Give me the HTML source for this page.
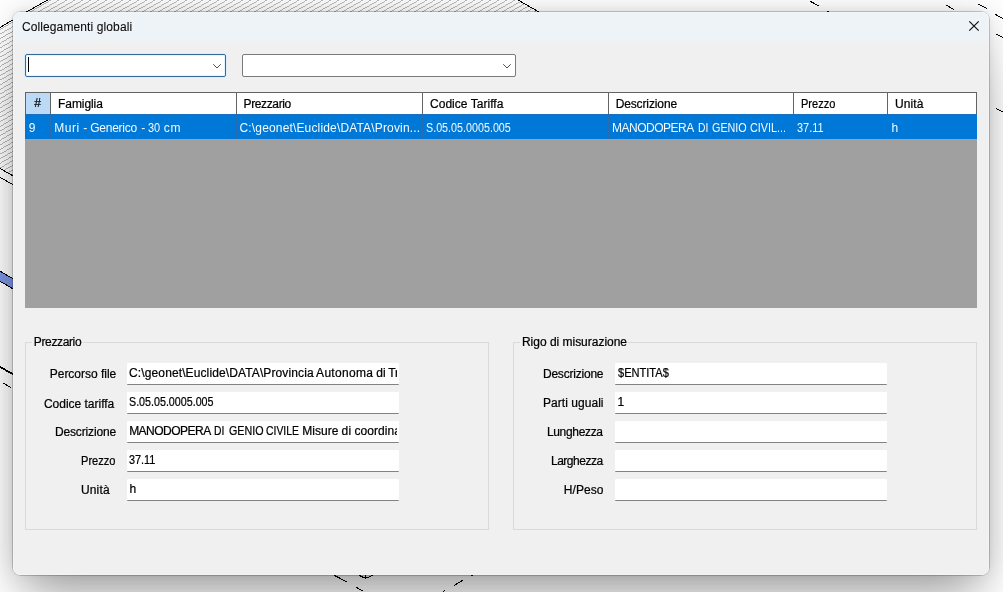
<!DOCTYPE html>
<html lang="it">
<head>
<meta charset="utf-8">
<title>Collegamenti globali</title>
<style>
*{box-sizing:border-box;margin:0;padding:0}
html,body{width:1003px;height:592px;overflow:hidden;background:#fff}
body{position:relative;font-family:"Liberation Sans",sans-serif;font-size:12px;color:#000;line-height:15px}
#bg{position:absolute;left:0;top:0;width:1003px;height:592px}
#shadow{position:absolute;left:13px;top:12px;width:976px;height:563px;border-radius:8px;
  box-shadow:0 0 0 1px rgba(0,0,0,.19),0 -2px 7px 0 rgba(0,0,0,.05),0 36px 48px -12px rgba(0,0,0,.3),0 0 32px 0 rgba(0,0,0,.16)}
#dlg{position:absolute;left:13px;top:12px;width:976px;height:563px;border-radius:7px;background:#f0f0f0;overflow:hidden}
#pc{position:absolute;left:-13px;top:-12px;width:1003px;height:592px;will-change:transform}
#hl{position:absolute;left:13px;top:12px;width:976px;height:563px;border-radius:7px;box-shadow:inset 0 0 0 1px rgba(255,255,255,.28)}
#tbar{position:absolute;left:13px;top:12px;width:976px;height:32px;background:linear-gradient(#eef3f8 0,#eef3f8 27.5px,#f0f0f0 31px)}
.w{position:absolute;top:0;white-space:pre;transform-origin:0 0}
.t{position:absolute;white-space:pre;height:15px;line-height:15px;transform-origin:0 0;-webkit-text-stroke:.22px currentColor}
#close{position:absolute;left:968px;top:20px;width:12px;height:12px}
.combo{position:absolute;top:54px;height:23px;background:#fff;border:1px solid #7a7a7a;border-radius:2px}
#c1{left:25px;width:201px;border-color:#336b9f;box-shadow:inset 0 0 0 1px #e4f6ff,0 0 0 1px rgba(200,235,255,.55)}
#c2{left:242px;width:274px}
.chev{position:absolute;top:62px;width:12px;height:8px}
#caret{position:absolute;left:28px;top:57px;width:1px;height:15px;background:#000}
#grid{position:absolute;left:25px;top:92px;width:952px;height:216px;background:#a0a0a0;overflow:hidden}
#ghead{position:absolute;left:0;top:0;width:952px;height:22px;background:#fff;box-shadow:inset 1px 1px 0 #646464,inset -1px 0 0 #646464}
.hc{position:absolute;top:1px;height:21px;overflow:hidden}
.hs{position:absolute;top:1px;width:1px;height:21px;background:#646464}
#grow{position:absolute;left:0;top:22px;width:952px;height:25px;background:#0078d7;color:#fff;border-top:1px solid #1a6fbd}
.rc{position:absolute;top:-1px;height:25px;overflow:hidden}
.rc .t{-webkit-text-stroke:0;color:#f4fbff}
.rs{position:absolute;top:0;width:1px;height:24px;background:#2a6cb0}
.gb{position:absolute;top:342px;width:464px;height:188px;border:1px solid #d9d9d9}
.lgb{position:absolute;top:336px;height:13px;background:#f0f0f0}
.in{position:absolute;width:272px;height:22px;background:#fff;border-bottom:1px solid #838383;border-radius:1px;overflow:hidden}
.ic{position:absolute;left:1px;top:0;width:269px;height:21px;overflow:hidden}
</style>
</head>
<body>
<svg id="bg" width="1003" height="592" viewBox="0 0 1003 592">
  <path d="M51.07 0.00L-1.00 30.06 M59.07 0.00L-1.00 34.68 M67.07 0.00L-1.00 39.30 M75.07 0.00L-1.00 43.92 M83.07 0.00L-1.00 48.54 M91.07 0.00L-1.00 53.16 M99.07 0.00L-1.00 57.78 M107.07 0.00L-1.00 62.39 M115.07 0.00L-1.00 67.01 M123.07 0.00L-1.00 71.63 M131.07 0.00L-1.00 76.25 M139.07 0.00L-1.00 80.87 M147.07 0.00L-1.00 85.49 M155.07 0.00L-1.00 90.11 M163.07 0.00L-1.00 94.73 M171.07 0.00L-1.00 99.34 M179.07 0.00L-1.00 103.96 M187.07 0.00L-1.00 108.58 M195.07 0.00L-1.00 113.20 M203.07 0.00L-1.00 117.82 M211.07 0.00L-1.00 122.44 M219.07 0.00L-1.00 127.06 M227.07 0.00L-1.00 131.68 M235.07 0.00L-1.00 136.30 M243.07 0.00L-1.00 140.91 M251.07 0.00L-1.00 145.53 M259.07 0.00L-1.00 150.15 M267.07 0.00L-1.00 154.77 M275.07 0.00L-1.00 159.39 M283.07 0.00L-1.00 164.01 M291.07 0.00L-0.30 168.22 M299.07 0.00L3.70 170.53 M307.07 0.00L7.70 172.84 M315.07 0.00L11.70 175.15 M323.07 0.00L15.70 177.46 M331.07 0.00L19.70 179.77 M339.07 0.00L23.70 182.08 M347.07 0.00L27.70 184.39 M355.07 0.00L31.70 186.70 M363.07 0.00L35.70 189.01 M371.07 0.00L39.70 191.32 M379.07 0.00L43.70 193.63 M387.07 0.00L47.70 195.94 M395.07 0.00L51.70 198.25 M403.07 0.00L55.70 200.56 M411.07 0.00L59.70 202.87 M419.07 0.00L63.70 205.18 M427.07 0.00L67.70 207.48 M435.07 0.00L71.70 209.79 M443.07 0.00L75.70 212.10 M451.07 0.00L79.70 214.41 M459.07 0.00L83.70 216.72 M467.07 0.00L87.70 219.03 M475.07 0.00L91.70 221.34 M483.07 0.00L95.70 223.65 M491.07 0.00L99.70 225.96 M499.07 0.00L103.70 228.27 M507.07 0.00L107.70 230.58 M515.07 0.00L111.70 232.89 M520.53 1.46L115.70 235.20 M524.53 3.77L119.70 237.51 M528.53 6.08L123.70 239.82 M532.53 8.39L127.70 242.13 M536.53 10.70L131.70 244.43" stroke="#a2a2a2" stroke-width="0.75" fill="none" shape-rendering="crispEdges"/>
  <polygon points="0,271.2 13,278.7 13,288.8 0,281.3" fill="#7c96e6"/>
  <g stroke="#000" stroke-width="1" fill="none" shape-rendering="crispEdges">
    <path d="M0 27.4 L47.4 0"/>
    <path d="M518 0 L540 12.5"/>
    <path d="M0 168.4 L13 175.8"/>
    <path d="M0 177.3 L13 184.7"/>
    <path d="M0 271.2 L13 278.7"/>
    <path d="M0 281.3 L13 288.8"/>
    <path d="M0 366.9 L13 374.3" stroke-width="1.8"/>
    <path d="M3.3 383.2 L11 387.5"/>
    <path d="M810 1.2 L819.2 6"/>
    <path d="M827 11 L828.5 11.6"/>
    <path d="M946.2 5 L953.8 9.5"/>
    <path d="M978 4 L987 8.5"/>
    <path d="M995 14.2 L1003 18.6"/>
    <path d="M996 34.2 L1003 37.6"/>
    <path d="M996 108.4 L1003 111.8"/>
    <path d="M334 575.2 L346.7 581.8"/>
    <path d="M359 575.3 L365.5 578.4 L372.6 575.3"/>
    <path d="M365.5 575 L365.5 578.4"/>
    <path d="M355.9 587 L363.5 591.5"/>
    <path d="M454.3 585.4 L462.9 580.2"/>
    <path d="M443 591.5 L445 590.5"/>
    <path d="M471 575.5 L473 575.5"/>
  </g>
</svg>
<div id="shadow"></div>
<div id="dlg"><div id="pc">
  <div id="tbar"></div>
  <span class="t" style="left:21.90px;letter-spacing:0.114px;top:20px;-webkit-text-stroke:.1px #0c0c0c;color:#0c0c0c;">Collegamenti globali</span>
  <svg id="close" viewBox="0 0 12 12"><path d="M1.3 1.3 L10.7 10.7 M10.7 1.3 L1.3 10.7" stroke="#111" stroke-width="1.2" fill="none"/></svg>

  <div class="combo" id="c1"></div>
  <div id="caret"></div>
  <svg class="chev" style="left:211px" viewBox="0 0 12 8"><path d="M2.6 2.6 L6 6 L9.4 2.6" stroke="#484848" stroke-width="0.95" stroke-linecap="square" fill="none"/></svg>
  <div class="combo" id="c2"></div>
  <svg class="chev" style="left:501px" viewBox="0 0 12 8"><path d="M2.6 2.6 L6 6 L9.4 2.6" stroke="#484848" stroke-width="0.95" stroke-linecap="square" fill="none"/></svg>

  <div id="grid">
    <div id="ghead">
<div class="hc" style="left:1px;width:24px;background:#bcdaf5;"><span class="t" style="left:8.15px;top:3px;">#</span></div>
<div class="hs" style="left:25px"></div>
<div class="hc" style="left:26px;width:185px;"><span class="t" style="left:7.04px;letter-spacing:-0.076px;top:4px;">Famiglia</span></div>
<div class="hs" style="left:211px"></div>
<div class="hc" style="left:212px;width:185px;"><span class="t" style="left:6.54px;letter-spacing:-0.367px;top:4px;">Prezzario</span></div>
<div class="hs" style="left:397px"></div>
<div class="hc" style="left:398px;width:185px;"><span class="t" style="left:7.00px;letter-spacing:0.032px;top:4px;">Codice Tariffa</span></div>
<div class="hs" style="left:583px"></div>
<div class="hc" style="left:584px;width:184px;"><span class="t" style="left:6.64px;letter-spacing:-0.118px;top:4px;">Descrizione</span></div>
<div class="hs" style="left:768px"></div>
<div class="hc" style="left:769px;width:93px;"><span class="t" style="left:6.98px;transform:scaleX(0.921);top:4px;">Prezzo</span></div>
<div class="hs" style="left:862px"></div>
<div class="hc" style="left:863px;width:89px;"><span class="t" style="left:7.11px;letter-spacing:0.075px;top:4px;">Unità</span></div>
    </div>
    <div id="grow">
<div class="rc" style="left:1px;width:23px"><span class="t" style="left:2.81px;top:7px;">9</span></div>
<div class="rs" style="left:25px"></div>
<div class="rc" style="left:26px;width:184px"><span class="t" style="left:0;top:7px;"><span class="w" style="left:3.24px;letter-spacing:0.521px;">Muri </span><span class="w" style="left:32.13px;">- </span><span class="w" style="left:39.30px;letter-spacing:-0.263px;">Generico </span><span class="w" style="left:90.13px;">- </span><span class="w" style="left:97.43px;transform:scaleX(0.915);">30 </span><span class="w" style="left:112.71px;letter-spacing:0.863px;">cm</span></span></div>
<div class="rs" style="left:211px"></div>
<div class="rc" style="left:212px;width:184px"><span class="t" style="left:2.50px;letter-spacing:0.159px;top:7px;">C:\geonet\Euclide\DATA\Provin...</span></div>
<div class="rs" style="left:397px"></div>
<div class="rc" style="left:398px;width:184px"><span class="t" style="left:2.68px;transform:scaleX(0.895);top:7px;">S.05.05.0005.005</span></div>
<div class="rs" style="left:583px"></div>
<div class="rc" style="left:584px;width:183px"><span class="t" style="left:0;top:7px;"><span class="w" style="left:3.04px;letter-spacing:-0.492px;">MANODOPERA </span><span class="w" style="left:88.96px;transform:scaleX(0.86);">DI </span><span class="w" style="left:102.76px;transform:scaleX(0.898);">GENIO </span><span class="w" style="left:140.97px;transform:scaleX(0.903);">CIVIL...</span></span></div>
<div class="rs" style="left:768px"></div>
<div class="rc" style="left:769px;width:92px"><span class="t" style="left:3.43px;transform:scaleX(0.91);top:7px;">37.11</span></div>
<div class="rs" style="left:862px"></div>
<div class="rc" style="left:863px;width:89px"><span class="t" style="left:3.49px;top:7px;">h</span></div>
    </div>
  </div>

  <div class="gb" style="left:25px"></div>
  <div class="gb" style="left:513px"></div>
  <div class="lgb" style="left:32px;width:51px"></div>
  <div class="lgb" style="left:520px;width:108px"></div>
  <span class="t" style="left:33.84px;letter-spacing:-0.367px;top:335px;">Prezzario</span>
  <span class="t" style="left:521.94px;letter-spacing:-0.015px;top:335px;">Rigo di misurazione</span>

<span class="t" style="left:49.74px;letter-spacing:-0.015px;top:367px;">Percorso file</span>
<span class="t" style="left:43.90px;letter-spacing:-0.008px;top:397px;">Codice tariffa</span>
<span class="t" style="left:54.94px;letter-spacing:-0.148px;top:425px;">Descrizione</span>
<span class="t" style="left:80.98px;transform:scaleX(0.924);top:454px;">Prezzo</span>
<span class="t" style="left:80.91px;letter-spacing:0.174px;top:483px;">Unità</span>
<span class="t" style="left:542.94px;letter-spacing:-0.209px;top:367px;">Descrizione</span>
<span class="t" style="left:542.94px;letter-spacing:0.05px;top:396px;">Parti uguali</span>
<span class="t" style="left:546.94px;letter-spacing:-0.333px;top:425px;">Lunghezza</span>
<span class="t" style="left:550.94px;letter-spacing:-0.478px;top:454px;">Larghezza</span>
<span class="t" style="left:563.84px;letter-spacing:0.052px;top:483px;">H/Peso</span>

<div class="in" style="left:127px;top:363px"><div class="ic"><span class="t" style="left:0;top:3px;"><span class="w" style="left:1.10px;letter-spacing:0.114px;">C:\geonet\Euclide\DATA\Provincia </span><span class="w" style="left:188.07px;letter-spacing:0.316px;">Autonoma </span><span class="w" style="left:248.14px;letter-spacing:0.194px;">di </span><span class="w" style="left:260.22px;">Trento</span></span></div></div>
<div class="in" style="left:127px;top:392px"><div class="ic"><span class="t" style="left:0.99px;transform:scaleX(0.892);top:3px;">S.05.05.0005.005</span></div></div>
<div class="in" style="left:127px;top:421px"><div class="ic"><span class="t" style="left:0;top:3px;"><span class="w" style="left:1.14px;letter-spacing:-0.509px;">MANODOPERA </span><span class="w" style="left:86.36px;transform:scaleX(0.86);">DI </span><span class="w" style="left:100.57px;transform:scaleX(0.893);">GENIO </span><span class="w" style="left:138.39px;transform:scaleX(0.866);">CIVILE </span><span class="w" style="left:174.34px;letter-spacing:0.022px;">Misure </span><span class="w" style="left:213.44px;letter-spacing:0.341px;">di </span><span class="w" style="left:226.41px;letter-spacing:0.08px;">coordinamento</span></span></div></div>
<div class="in" style="left:127px;top:450px"><div class="ic"><span class="t" style="left:1.43px;transform:scaleX(0.905);top:3px;">37.11</span></div></div>
<div class="in" style="left:127px;top:479px"><div class="ic"><span class="t" style="left:1.39px;top:3px;">h</span></div></div>
<div class="in" style="left:615px;top:363px"><div class="ic"><span class="t" style="left:1.62px;transform:scaleX(0.922);top:3px;">$ENTITA$</span></div></div>
<div class="in" style="left:615px;top:392px"><div class="ic"><span class="t" style="left:1.41px;top:3px;">1</span></div></div>
<div class="in" style="left:615px;top:421px"></div>
<div class="in" style="left:615px;top:450px"></div>
<div class="in" style="left:615px;top:479px"></div>

  <div id="hl"></div>
</div></div>
</body>
</html>
